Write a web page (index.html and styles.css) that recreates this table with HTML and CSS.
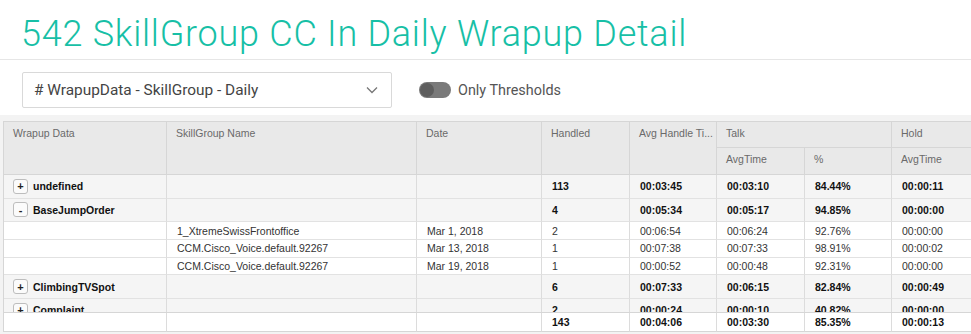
FILE: index.html
```html
<!DOCTYPE html>
<html>
<head>
<meta charset="utf-8">
<link rel="stylesheet" href="styles.css">
</head>
<body>
<header class="title-bar">
  <h1 class="title">542 SkillGroup CC In Daily Wrapup Detail</h1>
</header>
<section class="controls">
  <div class="select">
    <span class="select-text"># WrapupData - SkillGroup - Daily</span>
    <svg class="chevron" width="12" height="8" viewBox="0 0 12 8"><path d="M1 1.5 L6 6.5 L11 1.5" fill="none" stroke="#777" stroke-width="1.3"/></svg>
  </div>
  <label class="toggle">
    <span class="track"><span class="knob"></span></span>
    <span class="toggle-label">Only Thresholds</span>
  </label>
</section>
<section class="panel">
  <div class="grid">
    <div class="head">
      <div class="hc span2">Wrapup Data</div>
      <div class="hc span2">SkillGroup Name</div>
      <div class="hc span2">Date</div>
      <div class="hc span2">Handled</div>
      <div class="hc span2">Avg Handle Ti...</div>
      <div class="hc talk">Talk</div>
      <div class="hc">Hold</div>
      <div class="hc">AvgTime</div>
      <div class="hc">%</div>
      <div class="hc">AvgTime</div>
    </div>
    <div class="body">
      <div class="row group">
        <div class="c"><span class="btn">+</span>undefined</div><div class="c"></div><div class="c"></div>
        <div class="c">113</div><div class="c">00:03:45</div><div class="c">00:03:10</div><div class="c">84.44%</div><div class="c">00:00:11</div>
      </div>
      <div class="row group">
        <div class="c"><span class="btn">-</span>BaseJumpOrder</div><div class="c"></div><div class="c"></div>
        <div class="c">4</div><div class="c">00:05:34</div><div class="c">00:05:17</div><div class="c">94.85%</div><div class="c">00:00:00</div>
      </div>
      <div class="row detail">
        <div class="c"></div><div class="c">1_XtremeSwissFrontoffice</div><div class="c">Mar 1, 2018</div>
        <div class="c">2</div><div class="c">00:06:54</div><div class="c">00:06:24</div><div class="c">92.76%</div><div class="c">00:00:00</div>
      </div>
      <div class="row detail">
        <div class="c"></div><div class="c">CCM.Cisco_Voice.default.92267</div><div class="c">Mar 13, 2018</div>
        <div class="c">1</div><div class="c">00:07:38</div><div class="c">00:07:33</div><div class="c">98.91%</div><div class="c">00:00:02</div>
      </div>
      <div class="row detail">
        <div class="c"></div><div class="c">CCM.Cisco_Voice.default.92267</div><div class="c">Mar 19, 2018</div>
        <div class="c">1</div><div class="c">00:00:52</div><div class="c">00:00:48</div><div class="c">92.31%</div><div class="c">00:00:00</div>
      </div>
      <div class="row group">
        <div class="c"><span class="btn">+</span>ClimbingTVSpot</div><div class="c"></div><div class="c"></div>
        <div class="c">6</div><div class="c">00:07:33</div><div class="c">00:06:15</div><div class="c">82.84%</div><div class="c">00:00:49</div>
      </div>
      <div class="row group">
        <div class="c"><span class="btn">+</span>Complaint</div><div class="c"></div><div class="c"></div>
        <div class="c">2</div><div class="c">00:00:24</div><div class="c">00:00:10</div><div class="c">40.82%</div><div class="c">00:00:00</div>
      </div>
    </div>
    <div class="row foot">
      <div class="c"></div><div class="c"></div><div class="c"></div>
      <div class="c">143</div><div class="c">00:04:06</div><div class="c">00:03:30</div><div class="c">85.35%</div><div class="c">00:00:13</div>
    </div>
  </div>
</section>
</body>
</html>
```

FILE: styles.css
```css
html, body {
  margin: 0;
  padding: 0;
  background: #fff;
  overflow: hidden;
}
body {
  width: 971px;
  height: 334px;
  font-family: Roboto, "Liberation Sans", sans-serif;
}
.title-bar {
  padding: 14px 0 5px 21px;
  border-bottom: 1px solid #e6e6e6;
}
.title {
  margin: 0;
  font-family: Roboto, sans-serif;
  font-weight: 300;
  font-size: 36px;
  letter-spacing: 0.75px;
  line-height: 40px;
  color: #17bfa6;
  white-space: nowrap;
}
.controls {
  display: flex;
  align-items: center;
  gap: 27px;
  padding: 12px 0 7px 22px;
}
.select {
  box-sizing: border-box;
  width: 370px;
  height: 36px;
  border: 1px solid #d9d9d9;
  border-radius: 2px;
  background: #fff;
  display: flex;
  align-items: center;
  justify-content: space-between;
  padding: 0 13px 0 11px;
}
.select-text {
  font-size: 15.4px;
  color: #444;
}
.chevron { display: block; }
.toggle {
  display: flex;
  align-items: center;
  gap: 7px;
}
.track {
  position: relative;
  display: block;
  width: 32px;
  height: 16px;
  border-radius: 8px;
  background: #7a7a7a;
}
.knob {
  position: absolute;
  left: 1px;
  top: 1px;
  width: 14px;
  height: 14px;
  border-radius: 50%;
  background: #5e5e5e;
}
.toggle-label {
  font-size: 14.4px;
  color: #555;
}
.panel {
  background: #f3f3f3;
  padding: 6px 0 0 3px;
  height: 219px;
  box-sizing: border-box;
}
.grid {
  width: 980px;
  border-top: 1px solid #d6d6d6;
  border-left: 1px solid #d6d6d6;
  font-family: "Liberation Sans", Arial, sans-serif;
  font-size: 10.5px;
}
.head {
  display: grid;
  grid-template-columns: 163px 250px 125px 88px 87px 88px 87px 88px;
  grid-template-rows: 26px 27px;
  background: #e9e9e9;
}
.hc {
  box-sizing: border-box;
  border-right: 1px solid #d6d6d6;
  border-bottom: 1px solid #d6d6d6;
  padding: 5px 10px 0 9px;
  line-height: 13px;
  color: #6a6a6a;
  white-space: nowrap;
  overflow: hidden;
}
.span2 { grid-row: span 2; }
.talk { grid-column: span 2; }
.body {
  height: 137px;
  overflow: hidden;
}
.row {
  display: grid;
  grid-template-columns: 163px 250px 125px 88px 87px 88px 87px 88px;
}
.c {
  box-sizing: border-box;
  border-right: 1px solid #dcdcdc;
  border-bottom: 1px solid #e2e2e2;
  padding: 0 6px 0 10px;
  display: flex;
  align-items: center;
  white-space: nowrap;
  overflow: hidden;
}
.group {
  height: 23.67px;
  background: #f5f5f5;
  font-weight: bold;
  color: #111;
}
.group .c:first-child { padding-left: 9px; }
.detail {
  height: 17.67px;
  background: #fff;
  color: #333;
}
.btn {
  box-sizing: border-box;
  display: inline-flex;
  align-items: center;
  justify-content: center;
  width: 15px;
  height: 15px;
  margin-right: 5px;
  border: 1px solid #bdbdbd;
  border-radius: 3px;
  background: #fbfbfb;
  font-size: 11px;
  font-weight: bold;
  color: #222;
}
.foot {
  height: 19px;
  background: #fff;
  border-top: 1px solid #d6d6d6;
  font-weight: bold;
  color: #111;
}
.foot .c { border-bottom: 1px solid #d6d6d6; }
```
